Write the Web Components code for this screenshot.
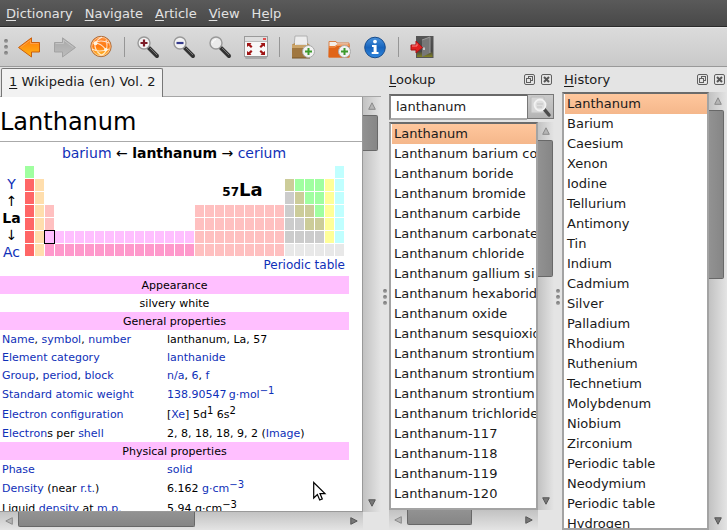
<!DOCTYPE html>
<html lang="en">
<head>
<meta charset="utf-8">
<title>Dictionary</title>
<style>
html, body { height: 100%; }
body { margin: 0; background: #e4e4e4; color: #1a1a1a; font: 13px/20px "DejaVu Sans", sans-serif; overflow: hidden; }
dict-window { height: 100%; }
</style>
</head>
<body>
<dict-window>
  <menu-bar slot="menu">
    <menu-item><u>D</u>ictionary</menu-item>
    <menu-item><u>N</u>avigate</menu-item>
    <menu-item><u>A</u>rticle</menu-item>
    <menu-item><u>V</u>iew</menu-item>
    <menu-item>H<u>e</u>lp</menu-item>
  </menu-bar>

  <tool-bar slot="tools">
    <tool-button label="Back"><svg viewBox="0 0 24 24" width="24" height="24"><defs><linearGradient id="o" x2="0" y2="1"><stop stop-color="#ff7a0a"/><stop offset="1" stop-color="#ffb515"/></linearGradient></defs><path d="M1.5 12.5 14.5 2.8V7.5H22.5V17H14.5V22Z" fill="url(#o)" stroke="#c9600f"/><path d="M3.5 12.5 13.5 5V8.5H21.5" fill="none" stroke="#ffa04a"/></svg></tool-button>
    <tool-button label="Forward"><svg viewBox="0 0 24 24" width="24" height="24"><defs><linearGradient id="g" x2="0" y2="1"><stop stop-color="#a8a8a8"/><stop offset="1" stop-color="#bcbcbc"/></linearGradient></defs><path d="M22.5 12.5 9.5 2.8V7.5H1.5V17H9.5V22Z" fill="url(#g)" stroke="#a3a3a3"/><path d="M2.5 8.5H10.5V5L20.5 12.5" fill="none" stroke="#c4c4c4"/></svg></tool-button>
    <tool-button label="Online"><svg viewBox="0 0 24 24" width="24" height="24"><defs><linearGradient id="w" x2="0" y2="1"><stop stop-color="#ff8e3a"/><stop offset=".5" stop-color="#ff7a10"/><stop offset="1" stop-color="#ffc22e"/></linearGradient></defs><circle cx="12" cy="11.5" r="10.2" fill="url(#w)" stroke="#a86a3c"/><circle cx="12" cy="11.5" r="9.2" fill="none" stroke="#ffc48d"/><path d="M6 8Q11 4 20 8M6 8Q5 15 12 20M6 8Q12 8 17 15M12 20Q16 19 17 15Q19 11 17 5M3 14Q10 18 20 14M6 8Q9 4 13 2" fill="none" stroke="#fff" stroke-opacity=".75" stroke-width="1.1"/><circle cx="6.5" cy="8.3" r="2" fill="#fff3df"/><circle cx="16.8" cy="14.8" r="1.8" fill="#fff3df"/></svg></tool-button>
    <tool-sep></tool-sep>
    <tool-button label="Zoom in"><svg viewBox="0 0 24 24" width="24" height="24"><path d="M13 13 21 21" stroke="#333" stroke-width="4" stroke-linecap="round"/><path d="M14 13 21 20" stroke="#777" stroke-width="1"/><circle cx="8" cy="8" r="6" fill="#f3f3f3" stroke="#999" stroke-width="1.4"/><path d="M8 4.5V11.500M4.500 8H11.500" stroke="#7c1b26" stroke-width="2.200"/></svg></tool-button>
    <tool-button label="Zoom out"><svg viewBox="0 0 24 24" width="24" height="24"><path d="M13 13 21 21" stroke="#333" stroke-width="4" stroke-linecap="round"/><path d="M14 13 21 20" stroke="#777" stroke-width="1"/><circle cx="8" cy="8" r="6" fill="#f3f3f3" stroke="#999" stroke-width="1.400"/><path d="M4.500 8H11.500" stroke="#343a8c" stroke-width="2.200"/></svg></tool-button>
    <tool-button label="Reset zoom"><svg viewBox="0 0 24 24" width="24" height="24"><path d="M13 13 21 21" stroke="#333" stroke-width="4" stroke-linecap="round"/><path d="M14 13 21 20" stroke="#777" stroke-width="1"/><circle cx="8" cy="8" r="6" fill="#ebebeb" stroke="#999" stroke-width="1.400"/><path d="M4.500 8A3.500 3.500 0 0 1 8 4.500" stroke="#fff" fill="none"/></svg></tool-button>
    <tool-button label="Full screen"><svg viewBox="0 0 24 24" width="24" height="24"><rect x="1" y="21" width="22" height="3" rx="1.500" fill="#000" opacity=".18"/><rect x=".5" y="1.500" width="23" height="20" fill="#f8f8f8" stroke="#9a9a9a"/><path d="M1 2H23V6H1Z" fill="#dedede"/><path d="M19 4H22" stroke="#e05050" stroke-width="2"/><path d="M1 6.500H23" stroke="#bbb"/><g fill="#a01414"><path d="M3 8H7.500L6.300 9.200 8.500 11.400 7 12.900 4.600 10.700 3 12Z"/><path d="M21 8H16.500L17.700 9.200 15.500 11.400 17 12.900 19.400 10.700 21 12Z"/><path d="M3 20H7.500L6.300 18.800 8.500 16.600 7 15.100 4.600 17.300 3 16Z"/><path d="M21 20H16.500L17.700 18.800 15.500 16.600 17 15.100 19.400 17.300 21 16Z"/></g></svg></tool-button>
    <tool-sep></tool-sep>
    <tool-button label="Add dictionaries"><svg viewBox="0 0 24 24" width="24" height="24"><path d="M4 1H16L17 11H3Z" fill="#ededed" stroke="#b0b0b0"/><path d="M5 10H15" stroke="#ccc"/><path d="M1 9.500 4 8V11H16V8L19 10V23H1Z" fill="#b98f55"/><path d="M1 13H19V23H1Z" fill="#a0773f"/><path d="M1 10H19V13H1Z" fill="#cba468"/><path d="M1 23H19" stroke="#765628"/><circle cx="17.500" cy="16.500" r="6" fill="#f2f2f2" stroke="#aaa"/><path d="M17.500 13V20M14 16.500H21" stroke="#3c9a2c" stroke-width="2"/></svg></tool-button>
    <tool-button label="Add dictionary directory"><svg viewBox="0 0 24 24" width="24" height="24"><path d="M2 6.500H9L10 8H22V22H2Z" fill="#f4efe9" stroke="#d98047"/><path d="M2 11H8L10 9.500H22.500V22.500H1.500Z" fill="#e06418"/><path d="M2 12H8L10 10.500H22" fill="none" stroke="#f59a58"/><circle cx="17.500" cy="16.500" r="6" fill="#f2f2f2" stroke="#aaa"/><path d="M17.500 13V20M14 16.500H21" stroke="#3c9a2c" stroke-width="2"/></svg></tool-button>
    <tool-button label="About"><svg viewBox="0 0 24 24" width="24" height="24"><defs><linearGradient id="b" x2="0" y2="1"><stop stop-color="#4a92dc"/><stop offset=".5" stop-color="#1764bd"/><stop offset="1" stop-color="#2f86dd"/></linearGradient></defs><circle cx="12" cy="12.500" r="10.300" fill="url(#b)" stroke="#164b8c"/><circle cx="12" cy="6.600" r="1.900" fill="#fff"/><path d="M9 10H13.600V17H15.500V19H8.700V17H10.600V12H9Z" fill="#fff"/></svg></tool-button>
    <tool-sep></tool-sep>
    <tool-button label="Quit"><svg viewBox="0 0 24 24" width="24" height="24"><defs><linearGradient id="d" x2="0" y2="1"><stop stop-color="#555"/><stop offset=".7" stop-color="#444"/><stop offset="1" stop-color="#8a8a20"/></linearGradient></defs><rect x="6.500" y="1.500" width="16.500" height="21" fill="url(#d)" stroke="#555"/><path d="M12 5 20 2V18L12 22Z" fill="#777"/><path d="M12 5 20 2V18" fill="none" stroke="#999"/><path d="M14 12.500V15" stroke="#ddd" stroke-width="1.500"/><path d="M1 10H6V6L12.500 12.500 6 18V15H1Z" fill="#e02020" stroke="#a51515"/><path d="M2 11H7V8.500" stroke="#ff8080" fill="none"/></svg></tool-button>
  </tool-bar>

  <article-pane slot="article">
    <span slot="tab"><u>1</u> Wikipedia (en) Vol. 2</span>
    <element-article></element-article>
  </article-pane>

  <dock-panel slot="lookup">
    <span slot="title"><u>L</u>ookup</span>
    <search-field></search-field>
    <list-view both thumb-size="136" thumb-rest="216">
      <list-item selected>Lanthanum</list-item><list-item>Lanthanum barium co</list-item><list-item>Lanthanum boride</list-item><list-item>Lanthanum bromide</list-item><list-item>Lanthanum carbide</list-item><list-item>Lanthanum carbonate</list-item><list-item>Lanthanum chloride</list-item><list-item>Lanthanum gallium si</list-item><list-item>Lanthanum hexaborid</list-item><list-item>Lanthanum oxide</list-item><list-item>Lanthanum sesquioxid</list-item><list-item>Lanthanum strontium</list-item><list-item>Lanthanum strontium</list-item><list-item>Lanthanum strontium</list-item><list-item>Lanthanum trichloride</list-item><list-item>Lanthanum-117</list-item><list-item>Lanthanum-118</list-item><list-item>Lanthanum-119</list-item><list-item>Lanthanum-120</list-item>
    </list-view>
  </dock-panel>

  <dock-panel slot="history" indent>
    <span slot="title"><u>H</u>istory</span>
    <list-view thumb-size="168" thumb-rest="234">
      <list-item selected>Lanthanum</list-item><list-item>Barium</list-item><list-item>Caesium</list-item><list-item>Xenon</list-item><list-item>Iodine</list-item><list-item>Tellurium</list-item><list-item>Antimony</list-item><list-item>Tin</list-item><list-item>Indium</list-item><list-item>Cadmium</list-item><list-item>Silver</list-item><list-item>Palladium</list-item><list-item>Rhodium</list-item><list-item>Ruthenium</list-item><list-item>Technetium</list-item><list-item>Molybdenum</list-item><list-item>Niobium</list-item><list-item>Zirconium</list-item><list-item>Periodic table</list-item><list-item>Neodymium</list-item><list-item>Periodic table</list-item><list-item>Hydrogen</list-item>
    </list-view>
  </dock-panel>

</dict-window>

<script>
const BASE = `*{box-sizing:border-box}button{font:inherit;color:inherit;padding:0;border:0;background:none;margin:0}::slotted(*){box-sizing:border-box}`;
function define(name, markup, setup) {
  customElements.define(name, class extends HTMLElement {
    constructor() {
      super();
      this.attachShadow({ mode: 'open' });
    }
    connectedCallback() {
      this.shadowRoot.innerHTML = `<style>${BASE}</style>` + markup;
      if (setup) setup(this, this.shadowRoot);
    }
  });
}

define('menu-bar', `<style>
:host{display:block;background:linear-gradient(#5a5a5a,#484848);border-bottom:1px solid #2a2a2a;color:#e2e2e2}
nav{display:flex;gap:12px;height:26px;padding:2px 6px 0;align-items:center}
</style><nav><slot></slot></nav>`);

define('menu-item', `<style>
:host{display:block}
button{line-height:20px;text-underline-offset:2px}
</style><button type="button"><slot></slot></button>`);

define('grip-dots', `<style>
:host{display:flex;flex-direction:column;gap:2px}
i{width:4px;height:4px;border-radius:2px;background:linear-gradient(#707070,#a8a8a8)}
</style><i></i><i></i><i></i>`);

define('tool-bar', `<style>
:host{display:flex;align-items:center;height:40px;padding:0 4px;background:linear-gradient(#dbdbdb,#c9c9c9);border-top:1px solid #e8e8e8;border-bottom:1px solid #999}
grip-dots{width:7px}
</style><grip-dots></grip-dots><slot></slot>`);

define('tool-button', `<style>
:host{display:block}
button{display:flex;width:36px;height:36px;align-items:center;justify-content:center}
</style><button type="button"><slot></slot></button>`,
(el, root) => root.querySelector('button').setAttribute('aria-label', el.getAttribute('label')));

define('tool-sep', `<style>
:host{display:block;width:11px;height:20px;background:linear-gradient(#969696,#969696) 5px 0/1px 100% no-repeat}
</style>`);

define('scroll-bar', `<style>
:host{display:flex;flex-direction:column;width:18px;background:linear-gradient(90deg,#c2c2c2,#e4e4e4)}
:host([horizontal]){flex-direction:row;width:auto;height:18px;background:linear-gradient(#c2c2c2,#e4e4e4)}
button{flex:0 0 18px;display:flex;align-items:center;justify-content:center}
div{flex:0 1 0}
.thumb{width:15px;background:linear-gradient(90deg,#929292,#868686);border:1px solid #686868;border-left:0;border-radius:0 2px 2px 0;}
:host([horizontal]) .thumb{width:auto;height:15px;border:1px solid #686868;border-top:0;border-radius:0 0 2px 2px;background:linear-gradient(#929292,#868686)}
:host([horizontal]) .turn{transform:rotate(-90deg)}
</style>
<button type="button" aria-label="Scroll back"><svg class="turn" width="8" height="8" viewBox="0 0 8 8"><path d="M4 .8 7.300 7.300H.7Z" fill="#b5b5b5" stroke="#8a8a8a"/></svg></button>
<div class="thumb"></div><div class="rest"></div>
<button type="button" aria-label="Scroll forward"><svg class="turn" width="8" height="8" viewBox="0 0 8 8"><path d="M4 7.200 .7 .8H7.300Z" fill="#777" stroke="#555"/></svg></button>`,
(el, root) => {
  root.querySelector('.thumb').style.flexGrow = el.getAttribute('size');
  root.querySelector('.rest').style.flexGrow = el.getAttribute('rest');
});

define('list-item', `<style>
:host{display:block;height:20px;padding:0 2px;line-height:20px;white-space:nowrap;overflow:hidden}
:host([selected]){background:linear-gradient(#ffc79d,#f5b78b)}
</style><slot></slot>`, el => el.setAttribute('role', 'option'));

define('list-view', `<style>
:host{flex:1;min-height:0;display:grid;grid-template:minmax(0,1fr)/minmax(0,1fr) 18px}
:host([both]){grid-template:minmax(0,1fr) 20px/minmax(0,1fr) 16px}
.items{background:#fff;border:2px solid #a3a3a3;border-top-color:#6b6b6b;padding:0 0 0 1px;overflow:hidden}
scroll-bar{width:auto}
.h{display:none}
:host([both]) .h{display:flex;height:20px}
</style><div class="items" role="listbox"><slot></slot></div><scroll-bar class="v"></scroll-bar><scroll-bar class="h" horizontal size="65" rest="49"></scroll-bar>`,
(el, root) => {
  const v = root.querySelector('.v');
  v.setAttribute('size', el.getAttribute('thumb-size'));
  v.setAttribute('rest', el.getAttribute('thumb-rest'));
  v.replaceWith(v.cloneNode());
});

define('search-field', `<style>
:host{display:flex;height:26px;margin:2px 0 2px}
input{flex:1;min-width:0;font:inherit;color:inherit;height:26px;border:2px solid #aaa;border-top-color:#696969;border-left-color:#8a8a8a;border-right:0;padding:0 5px 2px;background:#fff;outline:0}
button{width:27px;height:25px;display:flex;align-items:center;justify-content:center;border:1px solid #777;background:linear-gradient(#cacaca,#b4b4b4)}
</style><input type="text" value="lanthanum" aria-label="Look up word"><button type="button" aria-label="Search"><svg width="24" height="24" viewBox="0 0 24 24"><path d="M2 2H15V18H2Z" fill="#d6d6d6" stroke="#bcbcbc"/><path d="M15 14 20 20" stroke="#4c4c4c" stroke-width="3.500" stroke-linecap="round"/><circle cx="11" cy="10" r="5.500" fill="#dedede" stroke="#f2f2f2" stroke-width="1.800"/><path d="M8 9H14M8 12H13" stroke="#c2c2c2"/></svg></button>`);

define('dock-panel', `<style>
:host{display:flex;flex-direction:column;min-width:0;min-height:0}
header{display:flex;align-items:center;height:25px;gap:5px;padding-right:1px;text-underline-offset:2px}
h2{flex:1;margin:0;font:inherit}
:host([indent]) h2{padding-left:2px}
button{display:flex;width:12px;height:12px}
</style><header><h2><slot name="title"></slot></h2>
<button type="button" aria-label="Float"><svg width="12" height="12" viewBox="0 0 12 12" fill="none" stroke="#606060"><rect x=".5" y=".5" width="10" height="10" rx="1.500"/><rect x="4.500" y="2.500" width="4" height="4"/><rect x="2.500" y="4.500" width="4" height="4" fill="#e4e4e4"/></svg></button>
<button type="button" aria-label="Close"><svg width="12" height="12" viewBox="0 0 12 12" fill="none" stroke="#606060"><rect x=".5" y=".5" width="10" height="10" rx="1.500"/><path d="M3 3 8 8M8 3 3 8" stroke="#555" stroke-width="2"/></svg></button>
</header><slot></slot>`);

define('article-pane', `<style>
:host{display:grid;grid-template:30px minmax(0,1fr) 18px/minmax(0,1fr) 18px;min-width:0;min-height:0}
.tabs{grid-column:1/3;display:flex;align-items:flex-end;padding-left:1px;box-shadow:inset 0 -1px #a6a6a6}
.tabs button{height:29px;padding:0 7px 2px;background:#f2f2f2;border:1px solid #777;border-width:1px 1px 0;border-radius:2px 2px 0 0;text-underline-offset:2px}
.view{background:#fff;overflow:hidden;border-right:1px solid #999;border-bottom:1px solid #999}
</style>
<div class="tabs" role="tablist"><button type="button" role="tab" aria-selected="true"><slot name="tab"></slot></button></div>
<div class="view"><slot></slot></div><scroll-bar size="34" rest="345"></scroll-bar>
<scroll-bar horizontal size="176" rest="151"></scroll-bar>`);

define('periodic-grid', `<style>
:host{display:grid;grid-template:repeat(7,12px)/repeat(32,9px);gap:1px}
b{grid-area:1/18/4/27;align-self:end;padding-left:6px;text-align:center;font-size:18px;line-height:24px;color:#000;}
small{font-size:12px}
.r{background:#f66}.o{background:#ffdead}.t{background:#ffc0c0}.l{background:#ffbfff}.a{background:#f9c}
.g{background:#a0ffa0}.m{background:#cc9}.p{background:#ccc}.y{background:#ff9}.n{background:#c0ffff}.u{background:#e8e8e8}
.s{outline:1px solid #000}
</style><b><small>57</small>La</b>`, (el, root) => {
  const d = 't'.repeat(9), gap = n => '.'.repeat(n);
  const rows = [
    'g' + gap(30) + 'n',
    'ro' + gap(24) + 'mgggyn',
    'ro' + gap(24) + 'pmggyn',
    'rot' + gap(14) + d + 'pmmgyn',
    'rot' + gap(14) + d + 'ppmmyn',
    'ro' + 'l'.repeat(15) + d + 'ppppyn',
    'ro' + 'a'.repeat(15) + d + 'uuuuuu'
  ];
  rows.forEach((row, y) => [...row].forEach((kind, x) => {
    if (kind === '.') return;
    const cell = document.createElement('span');
    cell.className = kind + (y === 5 && x === 2 ? ' s' : '');
    cell.style.gridArea = `${y + 1}/${x + 1}`;
    root.append(cell);
  }));
});

define('element-article', `<style>
:host{display:block;color:#000}
a{color:#0f30b8;text-decoration:none}
h1{margin:0;font-size:24px;font-weight:400;line-height:44px;height:45px;padding-top:3px;border-bottom:1px solid #aaa}
.body{padding-right:13px}
.near{margin:0;padding-right:1px;font-size:14px;line-height:22px;height:24px;text-align:center}
.chart{display:flex;align-items:flex-start}
.group{width:23px;margin-right:2px;display:flex;flex-direction:column;align-items:center;font-size:14px;line-height:17px;padding-top:10px;height:92px}
.more{margin:0;padding-right:4px;text-align:right;font-size:12px;line-height:14px}
table{width:100%;border-collapse:collapse;table-layout:fixed;font-size:11px;line-height:16px;margin-top:4px}
col.k{width:165px}
th,td{padding:2px 0 0 2px;height:18px;text-align:left;font-weight:400;white-space:nowrap}
.tall>*{height:20px}
.head>*{background:#ffbfff}
.head>*,.mid>*{text-align:center;padding:2px 0 0}
sup{font-size:10px;line-height:0;vertical-align:4px}
</style>
<h1>Lanthanum</h1>
<div class="body">
<p class="near"><a href="#barium">barium</a> ← <b>lanthanum</b> → <a href="#cerium">cerium</a></p>
<div class="chart"><div class="group"><a href="#Y">Y</a><span>↑</span><b>La</b><span>↓</span><a href="#Ac">Ac</a></div><periodic-grid></periodic-grid></div>
<p class="more"><a href="#table">Periodic table</a></p>
<table><colgroup><col class="k"><col></colgroup>
<tr class="head"><th colspan="2">Appearance</th></tr>
<tr class="mid"><td colspan="2">silvery white</td></tr>
<tr class="head"><th colspan="2">General properties</th></tr>
<tr><th><a href="#n">Name</a>, <a href="#s">symbol</a>, <a href="#z">number</a></th><td>lanthanum, La, 57</td></tr>
<tr><th><a href="#c">Element category</a></th><td><a href="#l">lanthanide</a></td></tr>
<tr><th><a href="#g">Group</a>, <a href="#p">period</a>, <a href="#b">block</a></th><td><a href="#na">n/a</a>, <a href="#6">6</a>, <a href="#f">f</a></td></tr>
<tr class="tall"><th><a href="#w">Standard atomic weight</a></th><td><a href="#gm">138.90547&#8201;g·mol<sup>−1</sup></a></td></tr>
<tr class="tall"><th><a href="#e">Electron configuration</a></th><td>[<a href="#xe">Xe</a>] 5d<sup>1</sup> 6s<sup>2</sup></td></tr>
<tr><th><a href="#el">Electron</a>s per <a href="#sh">shell</a></th><td>2, 8, 18, 18, 9, 2 (<a href="#i">Image</a>)</td></tr>
<tr class="head"><th colspan="2">Physical properties</th></tr>
<tr><th><a href="#ph">Phase</a></th><td><a href="#so">solid</a></td></tr>
<tr class="tall"><th><a href="#de">Density</a> (near <a href="#rt">r.t.</a>)</th><td>6.162 <a href="#gc">g·cm<sup>−3</sup></a></td></tr>
<tr class="tall"><th>Liquid <a href="#ld">density</a> at <a href="#mp">m.p.</a></th><td>5.94 g·cm<sup>−3</sup></td></tr>
</table></div>`);

define('dict-window', `<style>
:host{display:grid;grid-template-rows:auto auto minmax(0,1fr);position:relative}
main{display:grid;grid-template-columns:minmax(0,1fr) 8px minmax(0,165px) 8px minmax(0,165px);min-height:0}
main>slot{display:contents}
grip-dots{align-self:center;justify-self:center;padding:0 0 4px}
.cursor{position:absolute;left:313px;top:481px;pointer-events:none}
</style><slot name="menu"></slot><slot name="tools"></slot>
<main><slot name="article"></slot><grip-dots></grip-dots><slot name="lookup"></slot><grip-dots></grip-dots><slot name="history"></slot></main>
<svg class="cursor" width="14" height="21" viewBox="0 0 14 21"><path d="M.7 1.500V17L4.400 13.500 6.700 19 9.300 17.900 7 12.600H12Z" fill="#fff" stroke="#000" stroke-width="1.200"/></svg>`);
</script>
</body>
</html>
